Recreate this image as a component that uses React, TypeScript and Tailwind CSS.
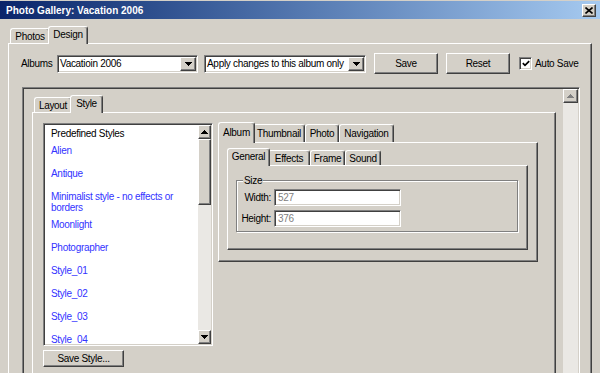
import React from "react";

// win2k style bevels
const raised =
  "border border-t-white border-l-white border-r-[#404040] border-b-[#404040] shadow-[inset_-1px_-1px_#808080]";
const sunken =
  "border border-t-[#808080] border-l-[#808080] border-r-white border-b-white shadow-[inset_1px_1px_#404040,inset_-1px_-1px_#d4d0c8]";

type Tab = { label: string; w: string };

const outerTabs: Tab[] = [
  { label: "Photos", w: "w-[40px]" },
  { label: "Design", w: "w-[40px]" },
];
const styleTabs: Tab[] = [
  { label: "Layout", w: "w-[38px]" },
  { label: "Style", w: "w-[33px]" },
];
const albumTabs: Tab[] = [
  { label: "Album", w: "w-[37px]" },
  { label: "Thumbnail", w: "w-[52px]" },
  { label: "Photo", w: "w-[34px]" },
  { label: "Navigation", w: "w-[55px]" },
];
const generalTabs: Tab[] = [
  { label: "General", w: "w-[43px]" },
  { label: "Effects", w: "w-[42px]" },
  { label: "Frame", w: "w-[35px]" },
  { label: "Sound", w: "w-[36px]" },
];

const styles = [
  { name: "Alien", mt: "mt-[6px]" },
  { name: "Antique", mt: "mt-[12px]" },
  { name: "Minimalist style - no effects or borders", mt: "mt-[12px]" },
  { name: "Moonlight", mt: "mt-[6px]" },
  { name: "Photographer", mt: "mt-[12px]" },
  { name: "Style_01", mt: "mt-[12px]" },
  { name: "Style_02", mt: "mt-[12px]" },
  { name: "Style_03", mt: "mt-[12px]" },
  { name: "Style_04", mt: "mt-[12px]" },
];

function Tabs({ tabs, active, h, hSel }: { tabs: Tab[]; active: string; h: string; hSel: string }) {
  return (
    <div className="relative z-10 flex items-end pl-[2px]">
      {tabs.map((t) => {
        const on = t.label === active;
        return (
          <div
            key={t.label}
            className={`${t.w} ${
              on ? `${hSel} relative z-10 -mx-[2px] -mb-[1px] pb-[2px]` : h
            } flex shrink-0 items-center justify-center rounded-t-[3px] border-l border-r border-t border-l-white border-r-[#404040] border-t-white bg-[#d4d0c8] shadow-[inset_-1px_0_#808080]`}
          >
            {t.label}
          </div>
        );
      })}
    </div>
  );
}

function Arrow({ up, fill = "#000" }: { up?: boolean; fill?: string }) {
  return (
    <svg width="7" height="4" viewBox="0 0 7 4" shapeRendering="crispEdges" className={up ? "" : "rotate-180"}>
      <path d="M3 0h1v1h1v1h1v1h1v1H0V3h1V2h1V1h1z" fill={fill} />
    </svg>
  );
}

function Combo({ w, value }: { w: string; value: string }) {
  return (
    <div className={`${sunken} ${w} flex h-[18px] shrink-0 bg-white p-[1px]`}>
      <span className="flex-1 overflow-hidden whitespace-nowrap pl-[1px] leading-[14px]">{value}</span>
      <span className={`${raised} flex w-[16px] items-center justify-center bg-[#d4d0c8]`}>
        <Arrow />
      </span>
    </div>
  );
}

function Button({ w, children }: { w: string; children: React.ReactNode }) {
  return (
    <div className={`${raised} ${w} flex shrink-0 items-center justify-center whitespace-nowrap bg-[#d4d0c8]`}>
      {children}
    </div>
  );
}

function Field({ label, value }: { label: string; value: string }) {
  return (
    <div className="flex h-[17px] items-center">
      <span className="w-[34px] text-right">{label}</span>
      <div className={`${sunken} ml-[3px] flex h-full w-[127px] items-center bg-white pl-[3px] text-[#808080]`}>
        {value}
      </div>
    </div>
  );
}

export default function App() {
  return (
    <div className="h-[373px] w-[600px] overflow-hidden bg-[#d4d0c8] font-['Liberation_Sans',Arial,sans-serif] text-[10px] leading-[11px] tracking-[-0.3px] text-black">
      {/* title bar */}
      <div className="pt-[1px]">
        <div className="flex h-[18px] items-center justify-between bg-linear-to-r from-[#0a246a] via-[#5478b0] to-[#a6caf0] pl-[6px] pr-[4px]">
          <span className="text-[10px] font-bold tracking-normal text-white">Photo Gallery: Vacation 2006</span>
          <div className={`${raised} flex h-[13px] w-[14px] items-center justify-center bg-[#d4d0c8]`}>
            <svg width="8" height="7" viewBox="0 0 8 7">
              <path d="M0.5 0.5L7.5 6.5M7.5 0.5L0.5 6.5" stroke="#000" strokeWidth="1.6" />
            </svg>
          </div>
        </div>
      </div>

      <div className="px-[8px] pt-[7px]">
        <Tabs tabs={outerTabs} active="Design" h="h-[15px]" hSel="h-[18px]" />
        <div className={`${raised} h-[340px] pl-[12px] pr-[11px] pt-[9px]`}>
          {/* albums row */}
          <div className="flex h-[21px] items-center whitespace-nowrap">
            <span className="w-[36px] shrink-0">Albums</span>
            <Combo w="w-[141px]" value="Vacatioin 2006" />
            <Combo w="w-[162px] ml-[6px]" value="Apply changes to this album only" />
            <Button w="w-[64px] h-[21px] ml-[8px]">Save</Button>
            <Button w="w-[64px] h-[21px] ml-[8px]">Reset</Button>
            <div className={`${sunken} ml-[9px] flex h-[13px] w-[13px] shrink-0 items-center justify-center bg-white`}>
              <svg width="8" height="7" viewBox="0 0 8 7">
                <path d="M0.8 3.2L3 5.4L7.2 1.2" fill="none" stroke="#000" strokeWidth="1.7" />
              </svg>
            </div>
            <span className="ml-[3px] shrink-0">Auto Save</span>
          </div>

          {/* scrollable design area */}
          <div className={`${sunken} ml-[1px] mt-[13px] flex h-[300px] p-[1px]`}>
            <div className="flex-1 pl-[8px] pr-[7px] pt-[6px]">
              <Tabs tabs={styleTabs} active="Style" h="h-[15px]" hSel="h-[18px]" />
              <div className={`${raised} flex h-[300px] items-start gap-[5px] pl-[10px] pt-[10px]`}>
                {/* style list */}
                <div className="flex w-[170px] flex-col">
                  <div className={`${sunken} flex h-[223px] bg-white p-[1px]`}>
                    <div className="flex-1 overflow-hidden pl-[6px] pr-[2px] pt-[3px]">
                      <div>Predefined Styles</div>
                      {styles.map((s) => (
                        <div key={s.name} className={`${s.mt} text-[#3333ff]`}>
                          {s.name}
                        </div>
                      ))}
                    </div>
                    <div className="flex w-[13px] flex-col bg-[#eae8e4]">
                      <div className={`${raised} flex h-[14px] items-center justify-center bg-[#d4d0c8]`}>
                        <Arrow up />
                      </div>
                      <div className={`${raised} h-[66px] bg-[#d4d0c8]`} />
                      <div className="flex-1" />
                      <div className={`${raised} flex h-[14px] items-center justify-center bg-[#d4d0c8]`}>
                        <Arrow />
                      </div>
                    </div>
                  </div>
                  <Button w="w-[81px] h-[17px] mt-[4px]">Save Style...</Button>
                </div>

                {/* album settings */}
                <div className="-mt-[1px] w-[320px]">
                  <Tabs tabs={albumTabs} active="Album" h="h-[18px]" hSel="h-[21px]" />
                  <div className={`${raised} h-[120px] pl-[8px] pr-[9px] pt-[5px]`}>
                    <Tabs tabs={generalTabs} active="General" h="h-[15px]" hSel="h-[18px]" />
                    <div className={`${raised} h-[85px] pl-[8px] pr-[9px] pt-[14px]`}>
                      <div className="relative flex h-[52px] flex-col gap-[4px] border border-[#808080] pt-[8px] shadow-[inset_1px_1px_white,1px_1px_white]">
                        <span className="absolute -top-[6px] left-[6px] bg-[#d4d0c8] px-[1px]">Size</span>
                        <Field label="Width:" value="527" />
                        <Field label="Height:" value="376" />
                      </div>
                    </div>
                  </div>
                </div>
              </div>
            </div>
            <div className="flex w-[15px] flex-col bg-[#eae8e4]">
              <div className={`${raised} flex h-[14px] items-center justify-center bg-[#d4d0c8]`}>
                <Arrow up fill="#808080" />
              </div>
            </div>
          </div>
        </div>
      </div>
    </div>
  );
}
